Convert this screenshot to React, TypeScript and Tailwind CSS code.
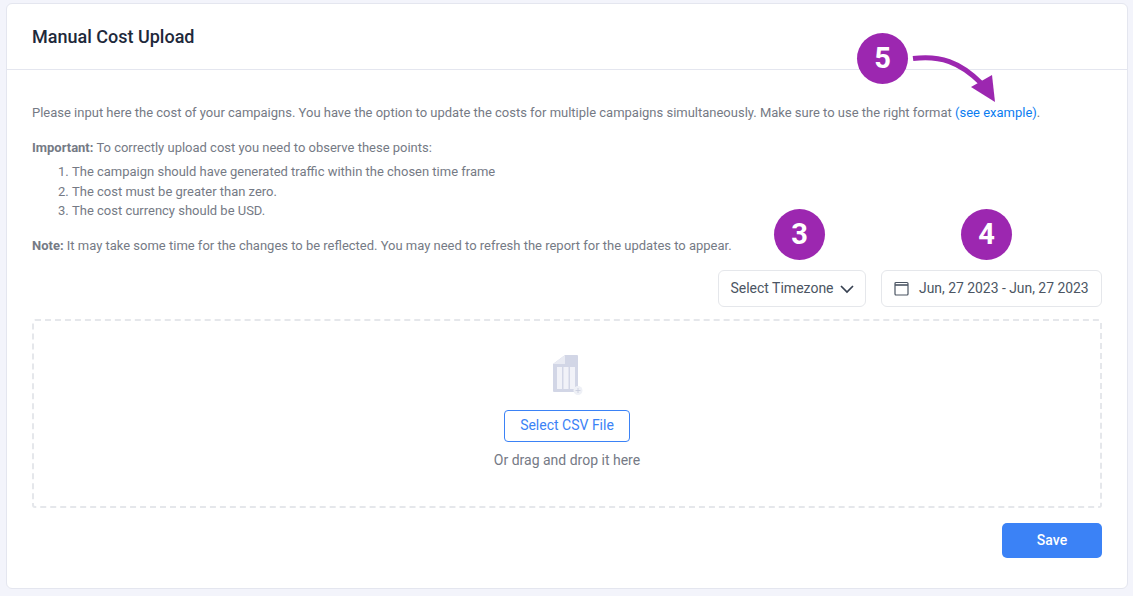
export default function App() {
  const badge = "absolute flex h-[51px] w-[51px] items-center justify-center rounded-full bg-[#9c27b0] text-[29px] font-bold text-white";
  return (
    <div className="relative h-[596px] w-[1133px] overflow-hidden bg-[#f3f4fb] pl-[6px] pt-[3px] font-['Roboto',sans-serif]">
      <div className="h-[586px] w-[1122px] rounded-[6px] border border-[#e4e6ef] bg-white">
        <div className="flex h-[66px] items-center border-b border-[#e4e6ef] pl-[25px]">
          <h1 className="text-[18px] font-medium leading-none text-[#1e293b]">Manual Cost Upload</h1>
        </div>
        <div className="px-[25px] pt-[33px] text-[12.99px] leading-[19.5px] text-[#757a85]">
          <p>
            Please input here the cost of your campaigns. You have the option to update the costs for multiple campaigns simultaneously. Make sure to use the right format{" "}
            <span className="text-[#0a7cf0]">(see example)</span>.
          </p>
          <p className="mt-[15px]"><b className="font-bold">Important:</b> To correctly upload cost you need to observe these points:</p>
          <ol className="mt-[5px] list-decimal pl-[40px]">
            <li>The campaign should have generated traffic within the chosen time frame</li>
            <li>The cost must be greater than zero.</li>
            <li>The cost currency should be USD.</li>
          </ol>
          <p className="mt-[15px]"><b className="font-bold">Note:</b> It may take some time for the changes to be reflected. You may need to refresh the report for the updates to appear.</p>
          <div className="mt-[15px] flex justify-end gap-[15px] text-[#4b5563]">
            <div className="flex h-[37px] w-[148px] items-center justify-center gap-[6px] rounded-[6px] border border-[#e5e7eb] text-[14px]">
              Select Timezone
              <svg width="14" height="16" viewBox="0 0 14 16" fill="none" stroke="#374151" strokeWidth="1.7"><path d="M1 5 7 11l6-6" /></svg>
            </div>
            <div className="flex h-[37px] w-[221px] items-center gap-[10px] rounded-[6px] border border-[#e5e7eb] pl-[12px] text-[13.9px]">
              <svg width="15" height="15" viewBox="0 0 15 15" fill="none" stroke="#4b5563" strokeWidth="1.2"><rect x="1" y="1.500" width="13" height="12.500" rx="1" /><path d="M1 4h13" strokeWidth="1.6" /></svg>
              Jun, 27 2023 - Jun, 27 2023
            </div>
          </div>
          <div className="mt-[12px] flex h-[189px] flex-col items-center rounded-[3px] border-2 border-dashed border-[#e5e7eb] pt-[34px]">
            <svg className="ml-[2px]" width="30" height="40" viewBox="0 0 30 40">
              <path d="M0 9 12 0h12a1 1 0 0 1 1 1v36H1a1 1 0 0 1-1-1Z" fill="#d2d6e6" />
              <path d="M0 9 12 0v9Z" fill="#e9ebf3" />
              <path d="M4 12h5v22H4ZM10.500 12h5v22h-5ZM17 12h5v22h-5Z" fill="#f1f2f8" />
              <circle cx="25" cy="35.500" r="4.500" fill="#eef0f6" />
              <path d="M25 33v5M22.500 35.500h5" stroke="#c6cbdd" strokeWidth="0.8" />
            </svg>
            <div className="mt-[15px] flex h-[32px] w-[126px] items-center justify-center rounded-[4px] border border-[#3b82f6] text-[14px] text-[#3b82f6]">Select CSV File</div>
            <p className="mt-[8px] text-[14px] leading-[20px] text-[#757a85]">Or drag and drop it here</p>
          </div>
          <div className="mt-[15px] flex justify-end">
            <div className="flex h-[35px] w-[100px] items-center justify-center rounded-[5px] bg-[#3b82f6] text-[14px] font-medium text-white">Save</div>
          </div>
        </div>
      </div>
      <div className={`${badge} left-[857px] top-[33px]`}>5</div>
      <div className={`${badge} left-[774px] top-[209px]`}>3</div>
      <div className={`${badge} left-[961px] top-[209px]`}>4</div>
      <svg className="absolute left-[910px] top-[50px]" width="90" height="56" viewBox="0 0 90 56" fill="none">
        <path d="M3 8.500C30 5 50 12 71 33" stroke="#9c27b0" strokeWidth="5" />
        <path d="M61 37 82 25 85 52Z" fill="#9c27b0" />
      </svg>
    </div>
  );
}
